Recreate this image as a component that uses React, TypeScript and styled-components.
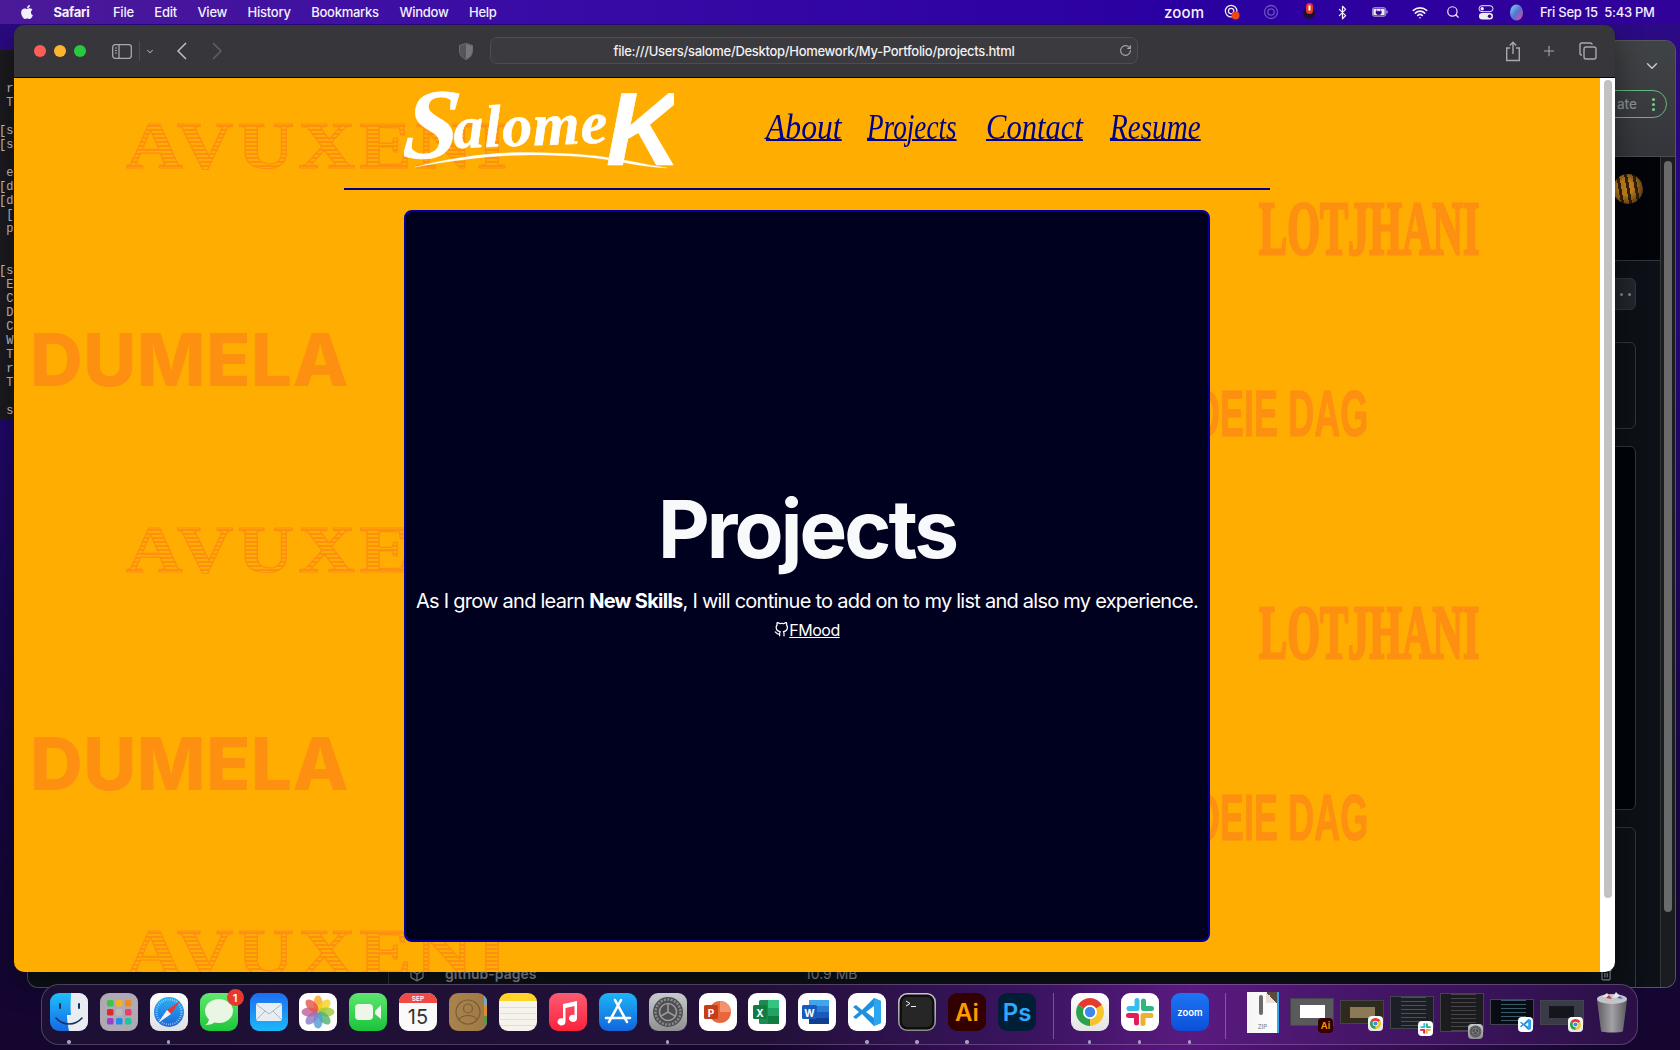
import React from "react";
import styled, { createGlobalStyle } from "styled-components";
import { FaApple } from "react-icons/fa";
import { FiGithub } from "react-icons/fi";
import { Wifi, Search, Bluetooth, ChevronDown, Plus, RotateCw, Package, Trash2 } from "lucide-react";

const Global = createGlobalStyle`
  html, body { margin: 0; padding: 0; height: 100%; overflow: hidden; background: #12062e; }
  * { box-sizing: border-box; }
`;

const Desktop = styled.div`
  position: relative;
  width: 1680px;
  height: 1050px;
  overflow: hidden;
  font-family: Inter, "Liberation Sans", sans-serif;
  background:
    radial-gradient(ellipse 420px 90px at 1180px 1050px, #5a1580 0%, rgba(90,21,128,0) 100%),
    linear-gradient(180deg, #2c0a86 0%, #20086a 40%, #160640 75%, #14062e 100%);
`;

const MenuBar = styled.header`
  position: absolute;
  inset: 0 0 auto 0;
  height: 24px;
  display: flex;
  align-items: center;
  justify-content: space-between;
  padding: 0 19px;
  color: #f3effc;
  font-size: 13px;
  font-weight: 500;
  letter-spacing: -0.25px;
  background: linear-gradient(90deg, #4b1a98 0%, #3a0ca6 30%, #2b00a2 70%, #30029a 100%);
`;
const MenuLeft = styled.nav`
  display: flex;
  align-items: center;
  gap: 20.5px;
`;
const AppleMark = styled.span`
  display: flex;
  margin-right: -2px;
`;
const MenuItem = styled.span<{ $bold?: boolean }>`
  font-weight: ${(p) => (p.$bold ? 700 : 500)};
  margin-right: ${(p) => (p.$bold ? 3 : 0)}px;
`;
const MenuRight = styled.div`
  display: flex;
  align-items: center;
`;
const ZoomMark = styled.span`
  font-size: 15px;
  font-weight: 500;
  letter-spacing: 0.2px;
  width: 40px;
`;
const Status = styled.span<{ $ml: number }>`
  display: flex;
  align-items: center;
  justify-content: center;
  width: 16px;
  height: 18px;
  margin-left: ${(p) => p.$ml}px;
`;
const Clock = styled.time`
  margin-left: 16px;
  white-space: pre;
  width: 121px;
`;

const TerminalWin = styled.div`
  position: absolute;
  left: -20px;
  top: 50px;
  width: 60px;
  height: 370px;
  padding: 32px 0 0 19px;
  background: #1b1b20;
  border-radius: 10px;
  color: #c9c9cc;
  font: 12px/14px "Liberation Mono", monospace;
  white-space: pre;
`;

const BackWindow = styled.div`
  position: absolute;
  left: 28px;
  top: 41px;
  width: 1647px;
  height: 946px;
  display: flex;
  flex-direction: column;
  border-radius: 10px;
  overflow: hidden;
  box-shadow: 0 0 0 1px #55575c;
`;
const BackBar = styled.div`
  height: 116px;
  display: flex;
  flex-direction: column;
  align-items: flex-end;
  padding: 16px 8px 0 0;
  background: linear-gradient(180deg, #404345 0%, #3c3e42 40%, #34353a 100%);
  color: #c6c7ca;
  border-bottom: 1px solid #4a4c50;
`;
const BackChevron = styled.span`
  margin-right: 6px;
  height: 33px;
`;
const PillButton = styled.div`
  width: 130px;
  height: 28px;
  display: flex;
  align-items: center;
  justify-content: flex-end;
  gap: 15px;
  padding-right: 11px;
  border: 1px solid #66b884;
  border-radius: 14px;
  color: #8d8f92;
  font-size: 13.5px;
  font-weight: 500;
`;
const GreenDots = styled.span`
  width: 3px;
  height: 3px;
  border-radius: 50%;
  background: #6fd08f;
  box-shadow: 0 -5px 0 #6fd08f, 0 5px 0 #6fd08f;
`;
const BackBody = styled.div`
  flex: 1;
  min-height: 0;
  display: flex;
`;
const BackMain = styled.main`
  flex: 1;
  display: flex;
  flex-direction: column;
  align-items: flex-end;
  background: #0d1117;
  border-right: 1px solid #34363a;
`;
const Banner = styled.div`
  width: 100%;
  height: 104px;
  flex: none;
  display: flex;
  justify-content: flex-end;
  padding: 17px 17px 0 0;
  background: #02040a;
  border-bottom: 1px solid #30363d;
`;
const Avatar = styled.span`
  width: 30px;
  height: 30px;
  border-radius: 50%;
  background:
    radial-gradient(circle at 40% 45%, rgba(30,20,10,0) 30%, #1e140a 100%),
    repeating-linear-gradient(80deg, #3a2409 0 3px, #c8861f 3px 8px);
`;
const MoreButton = styled.div`
  width: 60px;
  height: 32px;
  flex: none;
  margin: 17px 24px 32px 0;
  display: flex;
  align-items: center;
  justify-content: flex-end;
  gap: 5px;
  padding-right: 4px;
  background: #21262d;
  border: 1px solid #30363d;
  border-radius: 6px;
`;
const MoreDot = styled.i`
  width: 3px;
  height: 3px;
  border-radius: 50%;
  background: #7d8590;
`;
const RepoBox = styled.section<{ $h?: number; $dark?: boolean }>`
  width: 1248px;
  margin: 0 24px 17px 0;
  ${(p) => (p.$h ? `height: ${p.$h}px; flex: none;` : "flex: 1; margin-bottom: -8px;")}
  background: ${(p) => (p.$dark ? "#010409" : "transparent")};
  border: 1px solid #30363d;
  border-radius: 6px;
  display: flex;
  align-items: flex-end;
  padding: 0 22px 8px 20px;
  color: #8b949e;
`;
const RepoIcon = styled.span`
  display: flex;
  height: 24px;
  align-items: center;
`;
const RepoName = styled.strong`
  margin-left: 20px;
  font-size: 14px;
  font-weight: 600;
  line-height: 24px;
  width: 360px;
`;
const RepoSize = styled.span`
  font-size: 14px;
  line-height: 24px;
  flex: 1;
`;
const BackTrack = styled.div`
  width: 14px;
  padding: 4px 3px 75px;
  display: flex;
  background: #1a1c20;
`;
const BackThumb = styled.div`
  flex: 1;
  background: #6a6a6a;
  border-radius: 4px;
`;

const SafariWindow = styled.div`
  position: absolute;
  left: 14px;
  top: 25px;
  width: 1601px;
  height: 947px;
  display: flex;
  flex-direction: column;
  border-radius: 10px;
  overflow: hidden;
  box-shadow: 0 10px 30px rgba(0, 0, 0, 0.45);
`;
const Toolbar = styled.div`
  height: 53px;
  flex: none;
  display: flex;
  align-items: center;
  padding-left: 20px;
  background: #37363b;
  border-bottom: 1px solid #050505;
  color: #a9a8ae;
`;
const Light = styled.span<{ $c: string }>`
  width: 12px;
  height: 12px;
  border-radius: 50%;
  margin-right: 8px;
  background: ${(p) => p.$c};
`;
const ToolIcon = styled.span<{ $ml: number; $w: number; $dim?: boolean }>`
  display: flex;
  justify-content: center;
  width: ${(p) => p.$w}px;
  margin-left: ${(p) => p.$ml}px;
  color: ${(p) => (p.$dim ? "#626167" : "inherit")};
`;
const ToolSep = styled.span`
  width: 1px;
  height: 20px;
  margin-left: 7px;
  background: #4c4b50;
`;
const UrlBox = styled.div`
  position: relative;
  width: 648px;
  height: 27px;
  margin: 0 0 2px 17px;
  padding-top: 1px;
  display: flex;
  align-items: center;
  justify-content: center;
  background: #3b3a3f;
  border: 1px solid #4e4d52;
  border-radius: 7px;
  color: #f1f1f2;
  font-size: 13px;
  font-weight: 500;
  letter-spacing: -0.3px;
`;
const Reload = styled.span`
  position: absolute;
  right: 5px;
  top: 6px;
  display: flex;
  color: #a9a8ae;
`;
const Viewport = styled.div`
  flex: 1;
  min-height: 0;
  display: flex;
`;
const Page = styled.div`
  position: relative;
  flex: 1;
  display: flex;
  flex-direction: column;
  align-items: center;
  overflow: hidden;
  background: #ffad00;
`;
const ScrollTrack = styled.div`
  width: 15px;
  display: flex;
  padding: 2px 3px 74px 4px;
  background: #fff;
`;
const ScrollThumb = styled.div`
  flex: 1;
  background: #c2c2c2;
  border-radius: 4px;
`;

const Word = styled.span<{ $x: number; $y: number }>`
  position: absolute;
  left: ${(p) => p.$x}px;
  top: ${(p) => p.$y}px;
  white-space: nowrap;
  line-height: 1;
  color: #fd9011;
  transform-origin: left top;
`;
const EngravedWord = styled(Word)`
  font: 700 68px/1 "Liberation Serif", serif;
  letter-spacing: 3.8px;
  color: transparent;
  -webkit-text-stroke: 1.2px #fd9011;
  background: repeating-linear-gradient(0deg, #fd9011 0 2px, transparent 2px 4px);
  -webkit-background-clip: text;
  background-clip: text;
  transform: scaleX(1.15);
`;
const SansWord = styled(Word)`
  font: 800 73px/1 Inter, "Liberation Sans", sans-serif;
  letter-spacing: 0.4px;
`;
const SlabWord = styled(Word)`
  font: 700 76px/1 "Liberation Serif", serif;
  -webkit-text-stroke: 3px #fd9011;
  transform: scaleX(0.555);
`;
const StencilWord = styled(Word)`
  font: 700 64px/1 "Liberation Sans", sans-serif;
  -webkit-text-stroke: 1px #fd9011;
  transform: scaleX(0.563);
`;

const Header = styled.div`
  position: relative;
  width: 926px;
  height: 112px;
  flex: none;
  display: flex;
  align-items: flex-start;
  padding: 10px 0 0 60px;
  border-bottom: 2px solid #00008b;
`;
const LogoMark = styled.svg`
  flex: none;
  text {
    font-family: "Liberation Serif", serif;
    font-weight: 700;
    font-style: italic;
    fill: #fff;
    stroke: #fff;
    stroke-width: 0.6px;
  }
  text.brush {
    font-family: "Liberation Sans", sans-serif;
  }
`;
const NavList = styled.nav`
  display: flex;
  margin: 19px 0 0 92px;
`;
const NavLink = styled.a<{ $w: number; $sx: number; $ml: number }>`
  display: block;
  width: ${(p) => p.$w}px;
  margin-left: ${(p) => p.$ml}px;
  font: italic 400 36px/40px "Liberation Serif", serif;
  color: #00008b;
  white-space: nowrap;
  text-decoration: underline;
  text-decoration-thickness: 1.5px;
  text-underline-offset: 0px;
  transform: scaleX(${(p) => p.$sx});
  transform-origin: left center;
`;
const Card = styled.section`
  position: relative;
  width: 806px;
  height: 732px;
  flex: none;
  margin-top: 20px;
  display: flex;
  flex-direction: column;
  align-items: center;
  justify-content: center;
  padding-bottom: 30px;
  background: #00001f;
  border: 2px solid #0000a0;
  border-radius: 8px;
  color: #fff;
`;
const Title = styled.h1`
  margin: 0 0 9px;
  font-size: 80px;
  font-weight: 700;
  line-height: 96px;
  letter-spacing: -2.9px;
  color: #f8f9fa;
`;
const Lead = styled.p`
  margin: 0 0 2px;
  font-size: 20px;
  line-height: 30px;
  font-weight: 400;
  letter-spacing: -0.75px;
  white-space: nowrap;
`;
const RepoLink = styled.a`
  display: inline-flex;
  align-items: center;
  font-size: 16px;
  line-height: 24px;
  letter-spacing: -0.5px;
  color: #fff;
  text-decoration: underline;
`;

const Dock = styled.footer`
  position: absolute;
  left: 41px;
  top: 984px;
  width: 1597px;
  height: 61px;
  display: flex;
  align-items: flex-start;
  gap: 12px;
  padding: 8px 0 0 8px;
  border: 1px solid rgba(255, 255, 255, 0.2);
  border-radius: 18px;
  background: linear-gradient(90deg, #1d1034 0%, #221038 45%, #3a1460 62%, #5a1a80 72%, #47166a 82%, #2a1046 100%);
`;
const Slot = styled.div`
  position: relative;
  width: 37.9px;
  height: 38px;
  flex: none;
  display: flex;
  align-items: center;
  justify-content: center;
`;
const RunDot = styled.i`
  position: absolute;
  left: 17px;
  top: 47px;
  width: 3.5px;
  height: 3.5px;
  border-radius: 50%;
  background: #a99fc0;
`;
const Badge = styled.b`
  position: absolute;
  right: -6px;
  top: -4px;
  width: 17px;
  height: 17px;
  border-radius: 50%;
  display: flex;
  align-items: center;
  justify-content: center;
  background: #e8392f;
  color: #fff;
  font-size: 11px;
  font-weight: 600;
`;
const Tile = styled.div<{ $bg: string; $s?: number }>`
  width: ${(p) => p.$s ?? 38}px;
  height: ${(p) => p.$s ?? 38}px;
  flex: none;
  border-radius: ${(p) => ((p.$s ?? 38) > 20 ? 9 : 4)}px;
  overflow: hidden;
  background: ${(p) => p.$bg};
  svg {
    display: block;
    width: 100%;
    height: 100%;
  }
`;
const DockSep = styled.span`
  width: 1px;
  height: 46px;
  margin: 0 5px;
  flex: none;
  background: rgba(255, 255, 255, 0.28);
`;
const Thumb = styled.div<{ $h: number; $bg: string }>`
  position: relative;
  width: 44px;
  height: ${(p) => p.$h}px;
  flex: none;
  background: ${(p) => p.$bg};
  border: 1px solid #44444c;
`;
const ThumbInner = styled.div<{ $bg: string }>`
  width: 60%;
  height: 50%;
  margin: 14% auto 0;
  background: ${(p) => p.$bg};
`;
const ThumbLines = styled.div<{ $c: string }>`
  width: 100%;
  height: 100%;
  background: repeating-linear-gradient(180deg, ${(p) => p.$c} 0 1px, transparent 1px 4px);
  background-size: 60% 100%;
  background-repeat: no-repeat;
  background-position: 60% 0;
`;
const ThumbBadge = styled.div`
  position: absolute;
  right: 0;
  bottom: -8px;
`;
const ZipDoc = styled.div`
  position: relative;
  width: 30px;
  height: 41px;
  flex: none;
  display: flex;
  align-items: flex-end;
  justify-content: center;
  padding-bottom: 3px;
  background: linear-gradient(90deg, #f4f4f4, #fff);
  color: #9a9a9a;
  font-size: 6px;
  font-weight: 600;
  box-shadow: 2px 0 0 #33a6e8;
`;
const ZipPull = styled.i`
  position: absolute;
  left: 12px;
  top: 3px;
  width: 4px;
  height: 20px;
  background: #6a6a6a;
  border-radius: 2px;
`;
const ZipCorner = styled.i`
  position: absolute;
  right: 0;
  top: 0;
  width: 11px;
  height: 11px;
  background: linear-gradient(45deg, #e8e0d8 50%, #5a4a40 50%);
`;

const svgText = { fontFamily: "Inter, 'Liberation Sans', sans-serif" };

const Finder = () => (
  <Tile $bg="linear-gradient(180deg,#1fc0fb,#1668e6)">
    <svg viewBox="0 0 38 38">
      <path d="M21 0H38V38H19C17.5 30 17 26 17 22H21C20 14 21 6 21 0Z" fill="#e9edf1" />
      <rect x="9" y="10" width="2" height="6" rx="1" fill="#14325c" />
      <rect x="28" y="10" width="2" height="6" rx="1" fill="#14325c" />
      <path d="M6 25C13 33 25 33 32 25" fill="none" stroke="#14325c" strokeWidth="1.6" strokeLinecap="round" />
    </svg>
  </Tile>
);
const Launchpad = () => (
  <Tile $bg="#aea9b2">
    <svg viewBox="0 0 38 38">
      {["#3fc14c", "#f5b31b", "#f08a1e", "#dc2a24", "#b9b9bd", "#ec3e68", "#9a3fd0", "#1b8df0", "#1fc4a0"].map((c, i) => (
        <rect key={c} x={7 + (i % 3) * 9} y={7 + Math.floor(i / 3) * 9} width="6.5" height="6.5" rx="1.5" fill={c} />
      ))}
    </svg>
  </Tile>
);
const SafariIcon = () => (
  <Tile $bg="linear-gradient(180deg,#fff,#dfe0e3)">
    <svg viewBox="0 0 38 38">
      <defs>
        <linearGradient id="saf" x1="0" y1="0" x2="0" y2="1">
          <stop offset="0" stopColor="#2cb0f5" />
          <stop offset="1" stopColor="#1a66d8" />
        </linearGradient>
      </defs>
      <circle cx="19" cy="19" r="15" fill="url(#saf)" />
      <circle cx="19" cy="19" r="12.5" fill="none" stroke="#cfe6fb" strokeWidth="2" strokeDasharray="0.6 1.6" />
      <path d="M30 8L17 17L21 21Z" fill="#e8392f" />
      <path d="M8 30L17 17L21 21Z" fill="#f4f4f4" />
    </svg>
  </Tile>
);
const Messages = () => (
  <Tile $bg="linear-gradient(180deg,#62e86e,#1ec63a)">
    <svg viewBox="0 0 38 38">
      <ellipse cx="19" cy="18" rx="14" ry="12" fill="#e9f6e4" />
      <path d="M9 25C9 29 7 31 5 32C10 32 13 31 15 29Z" fill="#e9f6e4" />
    </svg>
  </Tile>
);
const Mail = () => (
  <Tile $bg="linear-gradient(180deg,#1e6ef0,#1bb8fb)">
    <svg viewBox="0 0 38 38">
      <rect x="6" y="10" width="26" height="18" rx="2" fill="#e8edf3" />
      <path d="M6 11L19 21L32 11M6 27L15 18M32 27L23 18" fill="none" stroke="#a9b6c6" strokeWidth="1" />
    </svg>
  </Tile>
);
const Photos = () => (
  <Tile $bg="#fff">
    <svg viewBox="0 0 38 38">
      {["#f6a623", "#f4d21f", "#9cc93a", "#55b36b", "#4f9fd8", "#8c7cc4", "#c0639e", "#e4574c"].map((c, i) => (
        <ellipse key={c} cx="19" cy="10.5" rx="4.6" ry="8" fill={c} fillOpacity="0.82" transform={`rotate(${i * 45} 19 19)`} />
      ))}
    </svg>
  </Tile>
);
const FaceTime = () => (
  <Tile $bg="linear-gradient(180deg,#5ee66f,#19c43a)">
    <svg viewBox="0 0 38 38">
      <rect x="6" y="11" width="18" height="16" rx="4" fill="#eef6ea" />
      <path d="M26 18L32 12V26L26 21Z" fill="#eef6ea" />
    </svg>
  </Tile>
);
const Calendar = () => (
  <Tile $bg="#fafafa">
    <svg viewBox="0 0 38 38" style={svgText}>
      <rect width="38" height="10" fill="#ef4a43" />
      <text x="19" y="8" textAnchor="middle" fontSize="6.5" fontWeight="600" fill="#fff">SEP</text>
      <text x="19" y="31" textAnchor="middle" fontSize="20" fill="#333">15</text>
    </svg>
  </Tile>
);
const Contacts = () => (
  <Tile $bg="linear-gradient(90deg,#a8834e,#a07a45)">
    <svg viewBox="0 0 38 38">
      <rect x="35" y="3" width="3" height="10" fill="#7aa6c8" />
      <rect x="35" y="13" width="3" height="10" fill="#e08a2e" />
      <rect x="35" y="23" width="3" height="10" fill="#5a9a4a" />
      <circle cx="19" cy="19" r="12" fill="none" stroke="#7b5d33" strokeWidth="1.2" />
      <circle cx="19" cy="15.5" r="4.5" fill="none" stroke="#7b5d33" strokeWidth="1.2" />
      <path d="M10 27C13 21 25 21 28 27" fill="none" stroke="#7b5d33" strokeWidth="1.2" />
    </svg>
  </Tile>
);
const Notes = () => (
  <Tile $bg="linear-gradient(180deg,#ffd426 0 8px,#f6f3ec 8px)">
    <svg viewBox="0 0 38 38">
      {[14, 20, 26, 32].map((y) => (
        <rect key={y} x="1" y={y} width="36" height="0.6" fill="#d4d0c6" />
      ))}
    </svg>
  </Tile>
);
const Music = () => (
  <Tile $bg="linear-gradient(180deg,#fb5c74,#fa233b)">
    <svg viewBox="0 0 38 38">
      <path d="M14 11L28 8V25.5A4 3.6 0 1 1 25.5 22V13L16.5 15V29A4 3.6 0 1 1 14 25.5Z" fill="#fff" />
    </svg>
  </Tile>
);
const AppStore = () => (
  <Tile $bg="linear-gradient(180deg,#1cb5f6,#1264dc)">
    <svg viewBox="0 0 38 38">
      <path d="M22 7L10 29M16 7L28 29M7 25H31" fill="none" stroke="#fff" strokeWidth="2.6" strokeLinecap="round" />
    </svg>
  </Tile>
);
const Gear = ({ s }: { s?: number }) => (
  <Tile $bg="linear-gradient(180deg,#c7cbce,#8f9092)" $s={s}>
    <svg viewBox="0 0 38 38">
      <circle cx="19" cy="19" r="15" fill="#4e4e50" />
      <circle cx="19" cy="19" r="12.5" fill="none" stroke="#8a8a8c" strokeWidth="2.4" strokeDasharray="2 1.4" />
      <circle cx="19" cy="19" r="8.5" fill="none" stroke="#98989a" strokeWidth="1.6" />
      <path d="M19 19V10.5M19 19L11.6 23.2M19 19L26.4 23.2" stroke="#98989a" strokeWidth="1.6" />
    </svg>
  </Tile>
);
const Ppt = () => (
  <Tile $bg="#fff">
    <svg viewBox="0 0 38 38" style={svgText}>
      <circle cx="21" cy="19" r="11" fill="#e8663c" />
      <path d="M21 8A11 11 0 0 1 32 19H21Z" fill="#f39170" />
      <rect x="5" y="12" width="14" height="14" rx="1.5" fill="#c43e1c" />
      <text x="12" y="23.5" textAnchor="middle" fontSize="10" fontWeight="700" fill="#fff">P</text>
    </svg>
  </Tile>
);
const Excel = () => (
  <Tile $bg="#fff">
    <svg viewBox="0 0 38 38" style={svgText}>
      <rect x="11" y="7" width="20" height="24" rx="1.5" fill="#1f8a50" />
      <rect x="20" y="7" width="11" height="8" fill="#33c481" />
      <rect x="20" y="15" width="11" height="8" fill="#21a366" />
      <rect x="20" y="23" width="11" height="8" fill="#107c41" />
      <rect x="5" y="12" width="14" height="14" rx="1.5" fill="#107c41" />
      <text x="12" y="23.5" textAnchor="middle" fontSize="10" fontWeight="700" fill="#fff">X</text>
    </svg>
  </Tile>
);
const Word365 = () => (
  <Tile $bg="#fff">
    <svg viewBox="0 0 38 38" style={svgText}>
      <rect x="11" y="7" width="20" height="6" fill="#41a5ee" />
      <rect x="11" y="13" width="20" height="6" fill="#2b7cd3" />
      <rect x="11" y="19" width="20" height="6" fill="#185abd" />
      <rect x="11" y="25" width="20" height="6" fill="#103f91" />
      <rect x="4" y="12" width="15" height="14" rx="1.5" fill="#185abd" />
      <text x="11.5" y="23.5" textAnchor="middle" fontSize="10" fontWeight="700" fill="#fff">W</text>
    </svg>
  </Tile>
);
const VSCode = ({ s }: { s?: number }) => (
  <Tile $bg="#fff" $s={s}>
    <svg viewBox="0 0 38 38">
      <path d="M26 5L14 17L8 12L5 14L11 19L5 24L8 26L14 21L26 33L33 30V8Z" fill="#1f8fe0" />
      <path d="M26 5L33 8V30L26 33Z" fill="#2aa5f0" />
      <path d="M26 13L18 19L26 25Z" fill="#fff" />
    </svg>
  </Tile>
);
const TerminalIcon = () => (
  <Tile $bg="linear-gradient(180deg,#c9c9c9,#8a8a8a)">
    <svg viewBox="0 0 38 38" style={svgText}>
      <rect x="1.6" y="1.6" width="34.8" height="34.8" rx="7.5" fill="#0e0e0e" />
      <rect x="4" y="4" width="30" height="30" rx="5" fill="#262626" />
      <path d="M8 8L12 10.5L8 13" fill="none" stroke="#f0f0f0" strokeWidth="1" />
      <rect x="13" y="13" width="5" height="1" fill="#f0f0f0" />
    </svg>
  </Tile>
);
const LetterIcon = ({ bg, c, t, s }: { bg: string; c: string; t: string; s?: number }) => (
  <Tile $bg={bg} $s={s}>
    <svg viewBox="0 0 38 38" style={svgText}>
      <text x="19" y="28" textAnchor="middle" fontSize="24" fontWeight="600" fill={c}>{t}</text>
    </svg>
  </Tile>
);
const Chrome = ({ s }: { s?: number }) => (
  <Tile $bg="linear-gradient(180deg,#fff,#e4e4e4)" $s={s}>
    <svg viewBox="0 0 38 38">
      <path d="M19 19L6.88 12A14 14 0 0 1 31.12 12Z" fill="#e33b2e" />
      <path d="M19 19L31.12 12A14 14 0 0 1 19 33Z" fill="#f7c42c" />
      <path d="M19 19L19 33A14 14 0 0 1 6.88 12Z" fill="#2aa24c" />
      <circle cx="19" cy="19" r="7" fill="#fff" />
      <circle cx="19" cy="19" r="5.2" fill="#3f86ee" />
    </svg>
  </Tile>
);
const Slack = ({ s }: { s?: number }) => (
  <Tile $bg="#fff" $s={s}>
    <svg viewBox="0 0 38 38">
      <g fill="none" strokeWidth="5" strokeLinecap="round">
        <path d="M16 7.5V15.5M8 15.5H15" stroke="#38bdea" />
        <path d="M30.5 15.5H22.5M22.5 8V15" stroke="#2eb67d" />
        <path d="M22 30.5V22.5M30 22.5H23" stroke="#ecb22e" />
        <path d="M7.5 22.5H15.5M15.5 30V23" stroke="#e01e5a" />
      </g>
    </svg>
  </Tile>
);
const ZoomApp = () => (
  <Tile $bg="linear-gradient(180deg,#1e74f5,#0b50d8)">
    <svg viewBox="0 0 38 38" style={svgText}>
      <text x="19" y="22.5" textAnchor="middle" fontSize="9.5" fontWeight="600" fill="#fff">zoom</text>
    </svg>
  </Tile>
);
const TrashCan = styled.div`
  width: 32px;
  height: 43px;
  flex: none;
  svg {
    display: block;
  }
`;

const terminalLines = [" r", " T", "", "[s", "[s", "", " e", "[d", "[d", " [", " p", "", "", "[s", " E", " C", " D", " C", " W", " T", " r", " T", "", " s"];

const wordRows = [0, 403.5, 807];

export default function App() {
  return (
    <Desktop>
      <Global />
      <TerminalWin>{terminalLines.join("\n")}</TerminalWin>

      <BackWindow>
        <BackBar>
          <BackChevron>
            <ChevronDown size={18} />
          </BackChevron>
          <PillButton>
            <span>ate</span>
            <GreenDots />
          </PillButton>
        </BackBar>
        <BackBody>
          <BackMain>
            <Banner>
              <Avatar />
            </Banner>
            <MoreButton>
              <MoreDot />
              <MoreDot />
            </MoreButton>
            <RepoBox $h={87} />
            <RepoBox $h={364} $dark />
            <RepoBox>
              <RepoIcon><Package size={16} /></RepoIcon>
              <RepoName>github-pages</RepoName>
              <RepoSize>10.9 MB</RepoSize>
              <RepoIcon><Trash2 size={14} /></RepoIcon>
            </RepoBox>
          </BackMain>
          <BackTrack>
            <BackThumb />
          </BackTrack>
        </BackBody>
      </BackWindow>

      <SafariWindow>
        <Toolbar>
          <Light $c="#ff5f57" />
          <Light $c="#fdb52f" />
          <Light $c="#28c840" />
          <ToolIcon $ml={18} $w={20}>
            <svg width="20" height="15" viewBox="0 0 20 15" fill="none" stroke="currentColor" strokeWidth="1.3">
              <rect x="0.7" y="0.7" width="18.6" height="13.6" rx="2.5" />
              <path d="M7 0.7V14.3" />
              <path d="M3 4H5M3 6.5H5M3 9H5" strokeWidth="1" />
            </svg>
          </ToolIcon>
          <ToolSep />
          <ToolIcon $ml={5} $w={10}>
            <ChevronDown size={11} strokeWidth={2.5} />
          </ToolIcon>
          <ToolIcon $ml={22} $w={10}>
            <svg width="10" height="18" viewBox="0 0 10 18" fill="none" stroke="#c2c1c6" strokeWidth="1.5"><path d="M9 1L1 9L9 17" /></svg>
          </ToolIcon>
          <ToolIcon $ml={25} $w={10} $dim>
            <svg width="10" height="18" viewBox="0 0 10 18" fill="none" stroke="currentColor" strokeWidth="1.5"><path d="M1 1L9 9L1 17" /></svg>
          </ToolIcon>
          <ToolIcon $ml={237} $w={14} $dim>
            <svg width="14" height="17" viewBox="0 0 14 17">
              <path d="M7 0.5L13.5 2.5V8C13.5 12 10.5 15 7 16.5C3.5 15 0.5 12 0.5 8V2.5Z" fill="#55545a" stroke="#6c6b71" />
              <path d="M7 1V16C10.5 15 13 12 13 8V3Z" fill="#77767c" />
            </svg>
          </ToolIcon>
          <UrlBox>
            file:///Users/salome/Desktop/Homework/My-Portfolio/projects.html
            <Reload>
              <RotateCw size={13} />
            </Reload>
          </UrlBox>
          <ToolIcon $ml={367} $w={16}>
            <svg width="16" height="21" viewBox="0 0 16 21" fill="none" stroke="currentColor" strokeWidth="1.4">
              <path d="M5 7H1.7V19.5H14.3V7H11M8 13V1.5M4.8 4.5L8 1.3L11.2 4.5" />
            </svg>
          </ToolIcon>
          <ToolIcon $ml={20} $w={16}>
            <Plus size={18} strokeWidth={1.6} />
          </ToolIcon>
          <ToolIcon $ml={22} $w={18}>
            <svg width="18" height="18" viewBox="0 0 18 18" fill="none" stroke="currentColor" strokeWidth="1.4">
              <rect x="5" y="5" width="12" height="12" rx="2" />
              <path d="M13 2.8V2.5C13 1.5 12.5 1 11.5 1H2.5C1.5 1 1 1.5 1 2.5V11.5C1 12.5 1.5 13 2.5 13H3" />
            </svg>
          </ToolIcon>
        </Toolbar>
        <Viewport>
          <Page>
            {wordRows.map((dy) => (
              <React.Fragment key={dy}>
                <EngravedWord $x={112} $y={33 + dy}>AVUXENI</EngravedWord>
                <SansWord $x={16} $y={245 + dy}>DUMELA</SansWord>
                <SlabWord $x={1245} $y={112 + dy}>LOTJHANI</SlabWord>
                <StencilWord $x={1150} $y={304 + dy}>GOEIE DAG</StencilWord>
              </React.Fragment>
            ))}
            <Header>
              <LogoMark width="270" height="84" viewBox="0 0 270 84">
                <text transform="translate(-3 70) skewX(-6)" fontSize="100">S</text>
                <text transform="translate(50 60) rotate(-2)" fontSize="60" letterSpacing="1">alome</text>
                <text className="brush" transform="translate(202 77)" fontSize="104">K</text>
                <path d="M11 79C50 69 90 64 125 64.5C165 65 195 67 225 73C240 76 252 78 263 80C252 79.5 240 78 225 75.5C195 69 165 67 125 67C90 67 50 72 11 79Z" fill="#fff" stroke="#fff" strokeWidth="0.3" />
              </LogoMark>
              <NavList>
                <NavLink href="#" $w={76} $sx={0.88} $ml={0}>About</NavLink>
                <NavLink href="#" $w={91} $sx={0.755} $ml={25}>Projects</NavLink>
                <NavLink href="#" $w={97} $sx={0.85} $ml={28}>Contact</NavLink>
                <NavLink href="#" $w={91} $sx={0.81} $ml={27}>Resume</NavLink>
              </NavList>
            </Header>
            <Card>
              <Title>Projects</Title>
              <Lead>
                As I grow and learn <strong>New Skills</strong>, I will continue to add on to my list and also my experience.
              </Lead>
              <RepoLink href="#">
                <FiGithub size={15} />
                FMood
              </RepoLink>
            </Card>
          </Page>
          <ScrollTrack>
            <ScrollThumb />
          </ScrollTrack>
        </Viewport>
      </SafariWindow>

      <MenuBar>
        <MenuLeft>
          <AppleMark><FaApple size={16} /></AppleMark>
          <MenuItem $bold>Safari</MenuItem>
          <MenuItem>File</MenuItem>
          <MenuItem>Edit</MenuItem>
          <MenuItem>View</MenuItem>
          <MenuItem>History</MenuItem>
          <MenuItem>Bookmarks</MenuItem>
          <MenuItem>Window</MenuItem>
          <MenuItem>Help</MenuItem>
        </MenuLeft>
        <MenuRight>
          <ZoomMark>zoom</ZoomMark>
          <Status $ml={20}>
            <svg width="18" height="18" viewBox="0 0 18 18" fill="none">
              <circle cx="8" cy="8" r="6.5" stroke="#eee" strokeWidth="1.4" />
              <circle cx="8" cy="8" r="3" stroke="#eee" strokeWidth="1.4" />
              <circle cx="13" cy="13" r="4.5" fill="#f04510" />
            </svg>
          </Status>
          <Status $ml={23}>
            <svg width="16" height="16" viewBox="0 0 16 16" fill="none" stroke="#6a4fc0" strokeWidth="1.3">
              <circle cx="8" cy="8" r="6.5" />
              <circle cx="8" cy="8" r="3.2" />
            </svg>
          </Status>
          <Status $ml={22}>
            <svg width="16" height="18" viewBox="0 0 16 18">
              <circle cx="8" cy="10" r="6" fill="#1a1030" />
              <rect x="5" y="0" width="7" height="11" rx="3.5" fill="#e4372a" />
              <rect x="7.5" y="2.5" width="2" height="5" fill="#fff" />
            </svg>
          </Status>
          <Status $ml={17}>
            <Bluetooth size={15} strokeWidth={2} />
          </Status>
          <Status $ml={22}>
            <svg width="24" height="14" viewBox="0 0 24 14">
              <rect x="0.6" y="0.6" width="20" height="12.8" rx="3" fill="none" stroke="#eee" strokeWidth="1" />
              <rect x="2" y="2" width="17" height="10" rx="1.5" fill="#eee" />
              <rect x="21.8" y="5" width="1.4" height="4" fill="#eee" />
              <path d="M7 3V6M13 3V6M6 6H14V8C14 10 12 11 10 11C8 11 6 10 6 8Z" stroke="#30029a" fill="#30029a" strokeWidth="0.8" />
            </svg>
          </Status>
          <Status $ml={24}>
            <Wifi size={17} strokeWidth={2.4} />
          </Status>
          <Status $ml={17}>
            <Search size={14} strokeWidth={2} />
          </Status>
          <Status $ml={17}>
            <svg width="16" height="15" viewBox="0 0 16 15">
              <rect x="1" y="0.7" width="14" height="6" rx="3" fill="none" stroke="#eee" />
              <circle cx="4.2" cy="3.7" r="1.7" fill="#eee" />
              <rect x="1" y="8" width="14" height="6.4" rx="3.2" fill="#eee" />
              <circle cx="11.6" cy="11.2" r="1.8" fill="#30029a" />
            </svg>
          </Status>
          <Status $ml={14}>
            <svg width="15" height="17" viewBox="0 0 15 17">
              <defs>
                <linearGradient id="siri" x1="0" y1="0" x2="1" y2="1">
                  <stop offset="0" stopColor="#7ee0e8" />
                  <stop offset="0.5" stopColor="#5870d8" />
                  <stop offset="1" stopColor="#e0508c" />
                </linearGradient>
              </defs>
              <ellipse cx="7.5" cy="8.5" rx="6.5" ry="8" fill="url(#siri)" />
            </svg>
          </Status>
          <Clock>{"Fri Sep 15  5:43 PM"}</Clock>
        </MenuRight>
      </MenuBar>

      <Dock>
        <Slot><Finder /><RunDot /></Slot>
        <Slot><Launchpad /></Slot>
        <Slot><SafariIcon /><RunDot /></Slot>
        <Slot><Messages /><Badge>1</Badge></Slot>
        <Slot><Mail /></Slot>
        <Slot><Photos /></Slot>
        <Slot><FaceTime /></Slot>
        <Slot><Calendar /></Slot>
        <Slot><Contacts /></Slot>
        <Slot><Notes /></Slot>
        <Slot><Music /></Slot>
        <Slot><AppStore /></Slot>
        <Slot><Gear /><RunDot /></Slot>
        <Slot><Ppt /></Slot>
        <Slot><Excel /></Slot>
        <Slot><Word365 /></Slot>
        <Slot><VSCode /><RunDot /></Slot>
        <Slot><TerminalIcon /><RunDot /></Slot>
        <Slot><LetterIcon bg="#330000" c="#ff9a00" t="Ai" /><RunDot /></Slot>
        <Slot><LetterIcon bg="#001e36" c="#31a8ff" t="Ps" /></Slot>
        <DockSep />
        <Slot><Chrome /><RunDot /></Slot>
        <Slot><Slack /><RunDot /></Slot>
        <Slot><ZoomApp /><RunDot /></Slot>
        <DockSep />
        <Slot>
          <ZipDoc>
            <ZipPull />
            <ZipCorner />
            ZIP
          </ZipDoc>
        </Slot>
        <Slot>
          <Thumb $h={28} $bg="#5a5a5c">
            <ThumbInner $bg="#fff" />
            <ThumbBadge><LetterIcon bg="#330000" c="#ff9a00" t="Ai" s={15} /></ThumbBadge>
          </Thumb>
        </Slot>
        <Slot>
          <Thumb $h={24} $bg="#2f2a1e">
            <ThumbInner $bg="#8a7a55" />
            <ThumbBadge><Chrome s={15} /></ThumbBadge>
          </Thumb>
        </Slot>
        <Slot>
          <Thumb $h={33} $bg="#1c2026">
            <ThumbLines $c="#4a5058" />
            <ThumbBadge><Slack s={15} /></ThumbBadge>
          </Thumb>
        </Slot>
        <Slot>
          <Thumb $h={39} $bg="#1c1c1f">
            <ThumbLines $c="#45454a" />
            <ThumbBadge><Gear s={15} /></ThumbBadge>
          </Thumb>
        </Slot>
        <Slot>
          <Thumb $h={26} $bg="#0a0c14">
            <ThumbLines $c="#3a5a6a" />
            <ThumbBadge><VSCode s={15} /></ThumbBadge>
          </Thumb>
        </Slot>
        <Slot>
          <Thumb $h={25} $bg="#3a3b48">
            <ThumbInner $bg="#15161c" />
            <ThumbBadge><Chrome s={15} /></ThumbBadge>
          </Thumb>
        </Slot>
        <Slot>
          <TrashCan>
            <svg width="32" height="43" viewBox="0 0 32 43">
              <defs>
                <linearGradient id="bin" x1="0" y1="0" x2="1" y2="0">
                  <stop offset="0" stopColor="#5e5e62" />
                  <stop offset="0.5" stopColor="#a2a2a6" />
                  <stop offset="1" stopColor="#5a5a5e" />
                </linearGradient>
              </defs>
              <path d="M1 9L5 40C5 42 27 42 27 40L31 9Z" fill="url(#bin)" />
              <ellipse cx="16" cy="8" rx="15" ry="5" fill="#c4c4c8" />
              <path d="M6 6L11 2L14 6ZM16 7L20 1L25 6Z" fill="#e5e5ea" />
              <path d="M10 7L13 4L16 8Z" fill="#c23a3a" />
              <path d="M21 7L24 5L27 8Z" fill="#3a6ac2" />
            </svg>
          </TrashCan>
        </Slot>
      </Dock>
    </Desktop>
  );
}
